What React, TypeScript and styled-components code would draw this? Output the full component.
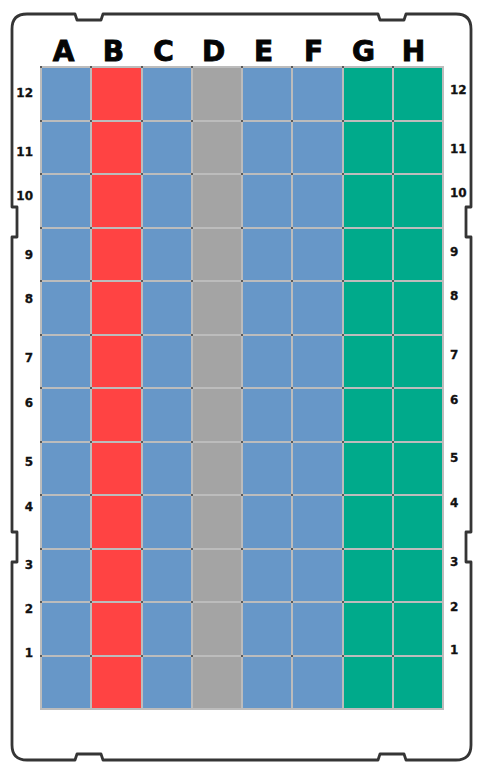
import styled, { createGlobalStyle } from "styled-components";

const GlobalStyle = createGlobalStyle`
  html, body {
    margin: 0;
    padding: 0;
    background: #ffffff;
  }
  body {
    font-family: "DejaVu Sans", "Liberation Sans", sans-serif;
  }
`;

type Kind = "blue" | "red" | "gray" | "green";

const COLUMNS: { letter: string; kind: Kind }[] = [
  { letter: "A", kind: "blue" },
  { letter: "B", kind: "red" },
  { letter: "C", kind: "blue" },
  { letter: "D", kind: "gray" },
  { letter: "E", kind: "blue" },
  { letter: "F", kind: "blue" },
  { letter: "G", kind: "green" },
  { letter: "H", kind: "green" },
];

const FILL: Record<Kind, string> = {
  blue: "#6797c8",
  red: "#ff4343",
  gray: "#a4a4a4",
  green: "#00aa8b",
};

const ROWS = [12, 11, 10, 9, 8, 7, 6, 5, 4, 3, 2, 1];

// vertical centres of the row numbers, measured from the top of the well grid
const LEFT_CENTRES = [27, 86, 130, 189, 233, 292, 337, 396, 441, 499, 543, 587];
const RIGHT_CENTRES = [24, 83, 127, 186, 230, 289, 334, 392, 437, 496, 541, 584];

const LABEL_LINE = 14;

const gapsFrom = (centres: number[]) =>
  centres.map((c, i) =>
    i === 0 ? c - LABEL_LINE / 2 : c - centres[i - 1] - LABEL_LINE
  );

const OUTLINE =
  "M 27 14 H 75 L 77 20 H 101 L 103 14 H 378 L 380 20 H 404 L 406 14 H 456 " +
  "Q 471 14 471 29 V 207 H 466 V 237 H 471 V 532 H 466 V 562 H 471 V 745 " +
  "Q 471 760 456 760 H 406 L 404 754 H 380 L 378 760 H 103 L 101 754 H 77 L 75 760 H 27 " +
  "Q 12 760 12 745 V 562 H 17 V 532 H 12 V 237 H 17 V 207 H 12 V 29 Q 12 14 27 14 Z";

const PlateOutline = () => (
  <OutlineSvg viewBox="0 0 481 770" width={481} height={770}>
    <path
      d={OUTLINE}
      fill="none"
      stroke="#353535"
      strokeWidth={2.8}
      strokeLinejoin="round"
    />
  </OutlineSvg>
);

const App: React.FC = () => {
  const leftGaps = gapsFrom(LEFT_CENTRES);
  const rightGaps = gapsFrom(RIGHT_CENTRES);

  return (
    <>
      <GlobalStyle />
      <Plate>
        <PlateOutline />
        <Corner />
        <LetterRow>
          {COLUMNS.map((c) => (
            <Letter key={c.letter}>{c.letter}</Letter>
          ))}
        </LetterRow>
        <Corner />

        <NumberColumn $side="left">
          {ROWS.map((r, i) => (
            <RowNumber key={r} $gap={leftGaps[i]}>
              {r}
            </RowNumber>
          ))}
        </NumberColumn>

        <Wells>
          {ROWS.map((r) =>
            COLUMNS.map((c) => (
              <Well key={`${c.letter}${r}`} $kind={c.kind} />
            ))
          )}
        </Wells>

        <NumberColumn $side="right">
          {ROWS.map((r, i) => (
            <RowNumber key={r} $gap={rightGaps[i]}>
              {r}
            </RowNumber>
          ))}
        </NumberColumn>
      </Plate>
    </>
  );
};

export default App;

const Plate = styled.div`
  position: relative;
  width: 481px;
  height: 770px;
  display: grid;
  grid-template-columns: 40px 404px 37px;
  grid-template-rows: 66px 644px 1fr;
`;

const OutlineSvg = styled.svg`
  position: absolute;
  left: 0;
  top: 0;
  pointer-events: none;
`;

const Corner = styled.div``;

const LetterRow = styled.div`
  display: grid;
  grid-template-columns: repeat(8, 1fr);
  align-items: end;
  padding: 0 2px 0;
`;

const Letter = styled.span`
  display: block;
  text-align: center;
  margin-right: 7px;
  font-family: "DejaVu Sans", "Liberation Sans", sans-serif;
  font-weight: 700;
  font-size: 28px;
  line-height: 28px;
  color: #050505;
  -webkit-text-stroke: 0.9px #050505;
`;

const NumberColumn = styled.div<{ $side: "left" | "right" }>`
  display: flex;
  flex-direction: column;
  align-items: ${(p) => (p.$side === "left" ? "flex-end" : "flex-start")};
  padding: ${(p) => (p.$side === "left" ? "0 7px 0 0" : "0 0 0 6px")};
`;

const RowNumber = styled.span<{ $gap: number }>`
  display: block;
  margin-top: ${(p) => p.$gap}px;
  font-family: "DejaVu Sans", "Liberation Sans", sans-serif;
  font-weight: 700;
  font-size: 12px;
  line-height: ${LABEL_LINE}px;
  color: #111111;
  -webkit-text-stroke: 0.3px #111111;
`;

const Wells = styled.div`
  display: grid;
  grid-template-columns: repeat(8, 1fr);
  grid-template-rows: repeat(12, 1fr);
  gap: 2px;
  padding: 2px;
  background: #bcbcbc;
`;

const Well = styled.div<{ $kind: Kind }>`
  position: relative;
  background: ${(p) => FILL[p.$kind]};

  &::before {
    content: "";
    position: absolute;
    left: -2px;
    top: -2px;
    width: 2px;
    height: 2px;
    background: #5a5a5a;
  }
`;
